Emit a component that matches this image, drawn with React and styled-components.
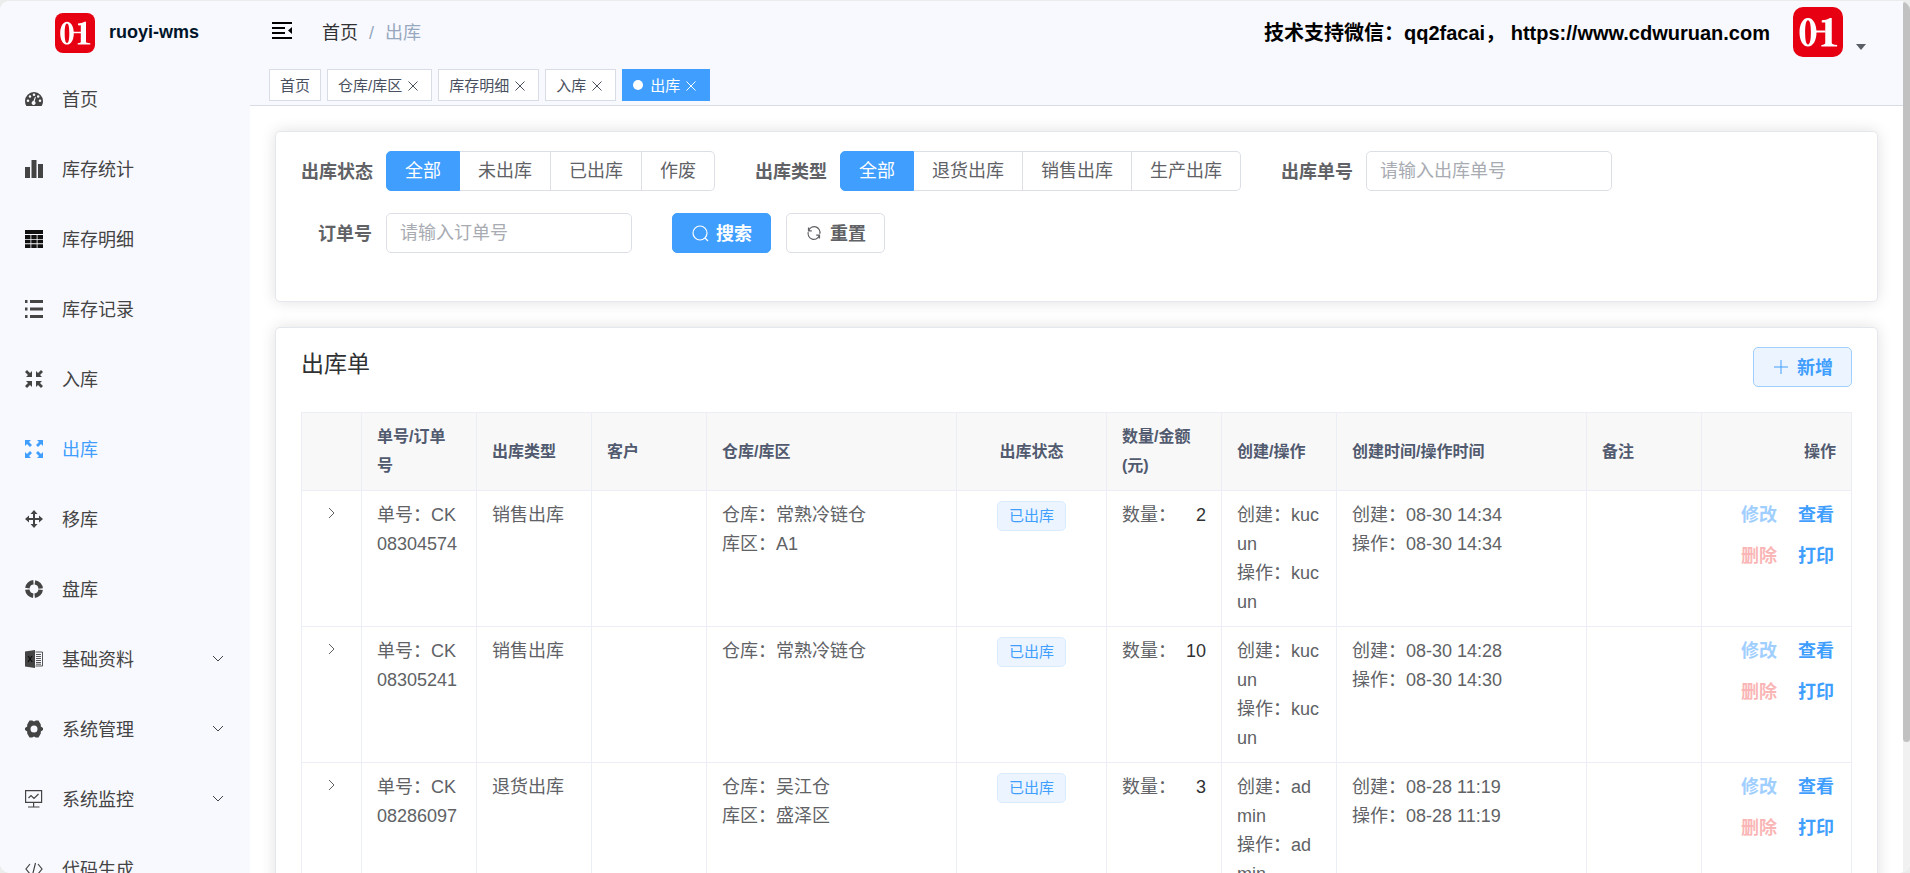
import React, { useState } from "react";
import styled, { createGlobalStyle } from "styled-components";

const GlobalStyle = createGlobalStyle`
  * {
    box-sizing: border-box;
  }

  body {
    margin: 0;
    background-color: #ebecec;
    color: #606266;
    font-family: "Liberation Sans", "Noto Sans CJK SC", sans-serif;
    font-size: 18px;
  }

  button,
  input {
    font-family: inherit;
    font-size: inherit;
  }
`;

const Page = styled.div`
  display: flex;
  height: 100vh;
  overflow: hidden;
  border-top: 1px solid #ebecec;
  border-radius: 10px;
  background-color: white;
`;

const Sidebar = styled.aside`
  flex: 0 0 250px;
  overflow: hidden;
  background-color: #f8f9fe;
`;

const SidebarLogo = styled.a`
  display: flex;
  align-items: center;
  justify-content: center;
  gap: 14px;
  height: 63px;
  padding-left: 4px;
  color: #001529;
  font-weight: bold;
  text-decoration: none;
`;

const Menu = styled.nav`
  display: flex;
  flex-direction: column;
`;

const MenuItem = styled.a`
  display: flex;
  align-items: center;
  flex-shrink: 0;
  height: 70px;
  padding: 0 25px;
  color: ${(props) => (props.$active ? "#409eff" : "#444444")};
  text-decoration: none;

  span {
    flex: 1;
    margin-left: 19px;
    padding-bottom: 2px;
  }
`;

const Main = styled.main`
  flex: 1;
  min-width: 0;
`;

const Header = styled.header`
  background-color: #f8f9fe;
  border-bottom: 1px solid #d8dce5;
`;

const Navbar = styled.div`
  display: flex;
  align-items: center;
  height: 62px;
  padding: 0 37px 2px 22px;
`;

const IconButton = styled.button`
  display: flex;
  padding: 0;
  border: none;
  background: none;
  color: inherit;
  cursor: pointer;
`;

const Breadcrumb = styled.nav`
  display: flex;
  align-items: baseline;
  flex: 1;
  gap: 11px;
  margin-left: 30px;
  color: #97a8be;

  a {
    color: #303133;
    text-decoration: none;
  }
`;

const Support = styled.div`
  margin-right: 23px;
  color: black;
  font-size: 20px;
  font-weight: bold;
  white-space: pre;
`;

const Account = styled(IconButton)`
  align-items: flex-end;
  gap: 13px;
  margin-top: 2px;
  color: #5a5e66;

  .caret {
    margin-bottom: 7px;
  }
`;

const Tags = styled.div`
  display: flex;
  gap: 6px;
  padding: 6px 19px 4px;
`;

const Tag = styled.div`
  display: flex;
  align-items: center;
  height: 32px;
  padding: 0 10px 1px;
  border: 1px solid ${(props) => (props.$active ? "#409eff" : "#d8dce5")};
  background-color: ${(props) => (props.$active ? "#409eff" : "white")};
  color: ${(props) => (props.$active ? "white" : "#495060")};
  font-size: 15px;

  &::before {
    content: "";
    display: ${(props) => (props.$active ? "block" : "none")};
    width: 10px;
    height: 10px;
    margin-right: 7px;
    border-radius: 50%;
    background-color: white;
  }

  a {
    color: inherit;
    text-decoration: none;
  }

  button {
    margin: 2px 3px 0 6px;
  }
`;

const Content = styled.div`
  display: flex;
  flex-direction: column;
  gap: 25px;
  padding: 25px;
`;

const Card = styled.section`
  padding: 19px 25px 26px;
  border: 1px solid #e4e7ed;
  border-radius: 5px;
  background-color: white;
  box-shadow: 0 0 15px rgba(0, 0, 0, 0.12);
`;

const SearchForm = styled.form`
  display: flex;
  flex-wrap: wrap;
  column-gap: 40px;
`;

const FormItem = styled.div`
  display: flex;
  align-items: center;
  height: 40px;
  margin-bottom: 22px;
`;

const Label = styled.label`
  width: 85px;
  padding: 0 14px 2px 0;
  font-weight: bold;
  text-align: right;
  white-space: nowrap;
`;

const Input = styled.input`
  width: 246px;
  height: 40px;
  padding: 0 13px;
  border: 1px solid #dcdfe6;
  border-radius: 5px;
  outline: none;
  color: #606266;

  &::placeholder {
    color: #a8abb2;
  }

  &:focus {
    border-color: #409eff;
  }
`;

const RadioButtons = styled.div`
  display: flex;
`;

const RadioButton = styled.label`
  display: flex;
  align-items: center;
  height: 40px;
  padding: 0 18px 4px;
  border: 1px solid ${(props) => (props.$checked ? "#409eff" : "#dcdfe6")};
  border-left-width: 0;
  background-color: ${(props) => (props.$checked ? "#409eff" : "white")};
  color: ${(props) => (props.$checked ? "white" : "#606266")};
  white-space: nowrap;
  cursor: pointer;

  &:first-child {
    border-left-width: 1px;
    border-radius: 5px 0 0 5px;
  }

  &:last-child {
    border-radius: 0 5px 5px 0;
  }

  input {
    position: absolute;
    opacity: 0;
  }
`;

const buttonColors = {
  primary: ["#409eff", "#409eff", "white"],
  plain: ["#ecf5ff", "#a0cfff", "#409eff"],
  normal: ["white", "#dcdfe6", "#606266"],
};

const Button = styled.button`
  display: flex;
  align-items: center;
  gap: 7px;
  height: 40px;
  padding: 0 18px 2px;
  border: 1px solid ${(props) => buttonColors[props.$kind][1]};
  border-radius: 5px;
  background-color: ${(props) => buttonColors[props.$kind][0]};
  color: ${(props) => buttonColors[props.$kind][2]};
  font-weight: bold;
  white-space: nowrap;
  cursor: pointer;

  svg {
    margin-top: 2px;
  }
`;

const Buttons = styled(FormItem)`
  gap: 15px;
`;

const CardHeader = styled.div`
  display: flex;
  justify-content: space-between;
  margin-bottom: 25px;

  h2 {
    margin: 0;
    color: #303133;
    font-size: 23px;
    font-weight: normal;
    line-height: 34px;
  }
`;

const Table = styled.table`
  width: 100%;
  table-layout: fixed;
  border-collapse: separate;
  border-spacing: 0;
  border-top: 1px solid #ebeef5;
  border-left: 1px solid #ebeef5;
  line-height: 29px;

  th,
  td {
    padding: 10px 15px 9px;
    border-right: 1px solid #ebeef5;
    border-bottom: 1px solid #ebeef5;
    text-align: left;
    word-break: break-all;
  }

  th {
    padding: 9px 15px 10px;
    background-color: #f8f8f9;
    color: #515a6e;
    font-size: 16px;
  }

  td {
    vertical-align: top;
  }

  .center {
    text-align: center;
  }

  .right {
    text-align: right;
  }
`;

const Expand = styled(IconButton)`
  margin: 6px auto 0;
`;

const Status = styled.span`
  display: inline-block;
  height: 30px;
  padding: 0 11px;
  border: 1px solid #d9ecff;
  border-radius: 5px;
  background-color: #ecf5ff;
  color: #409eff;
  font-size: 15px;
  line-height: 28px;
  vertical-align: top;
`;

const Quantity = styled.div`
  display: flex;
  justify-content: space-between;

  b {
    color: #303133;
    font-weight: normal;
  }
`;

const Actions = styled.div`
  display: grid;
  grid-template-columns: auto auto;
  justify-content: end;
  gap: 12px 21px;
  padding-right: 2px;
`;

const LinkButton = styled.button`
  padding: 0;
  border: none;
  background: none;
  color: ${(props) => props.$color};
  font-weight: bold;
  line-height: 29px;
  cursor: pointer;
`;

const Scrollbar = styled.div`
  flex: 0 0 7px;
  background-color: #f1f1f1;
`;

const ScrollThumb = styled.div`
  height: 85%;
  border-radius: 4px;
  background-color: #c1c1c1;
`;

const Logo = ({ size }) => (
  <svg width={size} height={size} viewBox="0 0 40 40">
    <rect width="40" height="40" rx="8" fill="#e60012" />
    <path
      fillRule="evenodd"
      fill="white"
      d="M12 8.800c4.200 0 6.800 5 6.800 11.400S16.200 31.600 12 31.600 5.200 26.600 5.200 20.200 7.800 8.800 12 8.800zm0 1.700c-1.700 0-2.300 4-2.300 9.700s.6 9.700 2.300 9.700 2.300-4 2.300-9.700-.6-9.700-2.300-9.700z"
    />
    <path fill="white" d="M15.500 18.800h10.500v1.500H15.500z" />
    <path
      fill="white"
      d="M23 10.500c2.500 0 4.500-.5 6.500-1.700h1.500v20c0 1 1.300 1.400 4.300 1.500v1.300H22.700v-1.300c2.200-.1 3.100-.5 3.100-1.500V12.300c-.9.200-1.700.1-2.800 0z"
    />
  </svg>
);

// Sidebar glyphs, all on an 18px grid
const icons = {
  dashboard: (
    <path
      fillRule="evenodd"
      d="M9 2a9 9 0 0 1 9 9c0 2-.5 3.500-1.300 5H1.300A10 10 0 0 1 0 11a9 9 0 0 1 9-9zM3 9.500a1.300 1.300 0 1 0 0 2.600 1.300 1.300 0 0 0 0-2.600zm2-4.300a1.300 1.300 0 1 0 0 2.600 1.300 1.300 0 0 0 0-2.600zm4-1.800A1.300 1.300 0 1 0 9 6a1.300 1.300 0 0 0 0-2.600zm4.200 1.800a1.300 1.300 0 1 0 0 2.600 1.300 1.300 0 0 0 0-2.600zM15 9.500a1.300 1.300 0 1 0 0 2.600 1.300 1.300 0 0 0 0-2.600zm-5-2.700L8.400 11a2 2 0 1 0 1.300.3l1.200-4.200z"
    />
  ),
  chart: <path d="M0 7h5v11H0zM6.500 0h5v18h-5zM13 4h5v14h-5z" />,
  table: (
    <path
      fill="#111111"
      d="M0 0h18v4H0zM0 5h5.500v4H0zM6.300 5h5.400v4H6.300zM12.500 5H18v4h-5.500zM0 9.800h5.500v3.500H0zM6.300 9.800h5.400v3.500H6.300zM12.500 9.800H18v3.500h-5.500zM0 14.200h5.500V18H0zM6.300 14.200h5.400V18H6.300zM12.500 14.200H18V18h-5.500z"
    />
  ),
  list: (
    <path d="M0 0h2.500v3H0zM5 0h13v3H5zM0 7.500h2.500v3H0zM5 7.500h13v3H5zM0 15h2.500v3H0zM5 15h13v3H5z" />
  ),
  shrink: (
    <path d="M2 0l3 3 2-2v6H1l2-2-3-3zM16 0l-3 3-2-2v6h6l-2-2 3-3zM2 18l3-3 2 2v-6H1l2 2-3 3zM16 18l-3-3-2 2v-6h6l-2 2 3 3z" />
  ),
  expand: (
    <path d="M0 0h6L4 2l3 3-2 2-3-3-2 2zM18 0h-6l2 2-3 3 2 2 3-3 2 2zM0 18h6l-2-2 3-3-2-2-3 3-2-2zM18 18h-6l2-2-3-3 2-2 3 3 2-2z" />
  ),
  move: (
    <path d="M9 0l3.500 4H10v4h4V5.500L18 9l-4 3.500V10h-4v4h2.500L9 18l-3.500-4H8v-4H4v2.500L0 9l4-3.500V8h4V4H5.500z" />
  ),
  ring: (
    <g fill="none" stroke="currentColor" strokeWidth="4.500">
      <circle cx="9" cy="9" r="6.700" strokeDasharray="9 1.524" strokeDashoffset="-0.762" />
    </g>
  ),
  excel: (
    <>
      <path d="M0 1.500 10 0v18L0 16.500z" />
      <path
        d="M10.500 2h7v14h-7M11 4.500h5M11 6.500h5M11 8.500h5M11 10.500h5M11 12.500h5M11 14.200h5"
        fill="none"
        stroke="currentColor"
        strokeWidth="0.900"
      />
      <path d="M3.200 6l4 6M7 6l-4 6" stroke="#111111" strokeWidth="1.300" />
    </>
  ),
  gear: (
    <path
      fillRule="evenodd"
      d="M4.500 0.500h2.700L9 1.500l1.800-1h2.700l2.300 4v2L18 8v2l-2.200 1.500v2l-2.300 4h-2.700L9 16.500l-1.800 1H4.500l-2.300-4v-2L0 10V8l2.200-1.500v-2zM9 5.500a3.500 3.500 0 1 0 0 7 3.500 3.500 0 0 0 0-7z"
    />
  ),
  monitor: (
    <path
      d="M.600.600h16v11.800H.600zM8.600 12.500V17M3 17h11.500M3.500 8l2.500-2.500 3 3 4.500-4.500"
      fill="none"
      stroke="currentColor"
      strokeWidth="1.200"
    />
  ),
  code: (
    <path
      d="M5 4 1 9l4 5M13 4l4 5-4 5M10.500 3l-3 12"
      fill="none"
      stroke="currentColor"
      strokeWidth="1.200"
    />
  ),
};

const MenuIcon = ({ name }) => (
  <svg width="18" height="18" viewBox="0 0 18 18" fill="currentColor">
    {icons[name]}
  </svg>
);

const Line = ({ width, height, d, stroke = 1 }) => (
  <svg
    width={width}
    height={height}
    viewBox={`0 0 ${width} ${height}`}
    fill="none"
    stroke="currentColor"
    strokeWidth={stroke}
  >
    <path d={d} />
  </svg>
);

const menu = [
  { icon: "dashboard", title: "首页" },
  { icon: "chart", title: "库存统计" },
  { icon: "table", title: "库存明细" },
  { icon: "list", title: "库存记录" },
  { icon: "shrink", title: "入库" },
  { icon: "expand", title: "出库", active: true },
  { icon: "move", title: "移库" },
  { icon: "ring", title: "盘库" },
  { icon: "excel", title: "基础资料", children: true },
  { icon: "gear", title: "系统管理", children: true },
  { icon: "monitor", title: "系统监控", children: true },
  { icon: "code", title: "代码生成" },
];

const tags = ["首页", "仓库/库区", "库存明细", "入库", "出库"];

const orders = [
  {
    no: "CK08304574",
    type: "销售出库",
    warehouse: "常熟冷链仓",
    area: "A1",
    quantity: 2,
    user: "kucun",
    created: "08-30 14:34",
    updated: "08-30 14:34",
  },
  {
    no: "CK08305241",
    type: "销售出库",
    warehouse: "常熟冷链仓",
    quantity: 10,
    user: "kucun",
    created: "08-30 14:28",
    updated: "08-30 14:30",
  },
  {
    no: "CK08286097",
    type: "退货出库",
    warehouse: "吴江仓",
    area: "盛泽区",
    quantity: 3,
    user: "admin",
    created: "08-28 11:19",
    updated: "08-28 11:19",
  },
];

const RadioGroup = ({ name, label, options }) => {
  const [value, setValue] = useState(options[0]);

  return (
    <FormItem role="radiogroup" aria-labelledby={name}>
      <Label as="span" id={name}>
        {label}
      </Label>
      <RadioButtons>
        {options.map((option) => (
          <RadioButton key={option} $checked={option === value}>
            <input
              type="radio"
              name={name}
              checked={option === value}
              onChange={() => setValue(option)}
            />
            {option}
          </RadioButton>
        ))}
      </RadioButtons>
    </FormItem>
  );
};

const OrderRow = ({ order }) => (
  <tr>
    <td>
      <Expand type="button" aria-label="展开">
        <Line width={7} height={12} d="M1 1l5 5-5 5" />
      </Expand>
    </td>
    <td>{`单号：${order.no}`}</td>
    <td>{order.type}</td>
    <td></td>
    <td>
      <div>{`仓库：${order.warehouse}`}</div>
      {order.area && <div>{`库区：${order.area}`}</div>}
    </td>
    <td className="center">
      <Status>已出库</Status>
    </td>
    <td>
      <Quantity>
        <span>数量：</span>
        <b>{order.quantity}</b>
      </Quantity>
    </td>
    <td>
      <div>{`创建：${order.user}`}</div>
      <div>{`操作：${order.user}`}</div>
    </td>
    <td>
      <div>{`创建：${order.created}`}</div>
      <div>{`操作：${order.updated}`}</div>
    </td>
    <td></td>
    <td>
      <Actions>
        <LinkButton $color="#a0cfff" disabled>
          修改
        </LinkButton>
        <LinkButton $color="#409eff">查看</LinkButton>
        <LinkButton $color="#fab6b6" disabled>
          删除
        </LinkButton>
        <LinkButton $color="#409eff">打印</LinkButton>
      </Actions>
    </td>
  </tr>
);

const App = () => (
  <>
    <GlobalStyle />
    <Page>
      <Sidebar>
        <SidebarLogo href="#">
          <Logo size={40} />
          ruoyi-wms
        </SidebarLogo>
        <Menu>
          {menu.map((item) => (
            <MenuItem key={item.title} href="#" $active={item.active}>
              <MenuIcon name={item.icon} />
              <span>{item.title}</span>
              {item.children && <Line width={14} height={8} d="M2 1l5 5 5-5" />}
            </MenuItem>
          ))}
        </Menu>
      </Sidebar>

      <Main>
        <Header>
          <Navbar>
            <IconButton type="button" aria-label="收起菜单">
              <svg width="20" height="18" viewBox="0 0 20 18" fill="black">
                <path d="M0 0h20v2H0zM0 5h13v2H0zM0 10h13v2H0zM0 15h20v2H0zM20 5v7l-4-3.500z" />
              </svg>
            </IconButton>
            <Breadcrumb>
              <a href="#">首页</a>
              <span>/</span>
              <span>出库</span>
            </Breadcrumb>
            <Support>技术支持微信：qq2facai， https://www.cdwuruan.com</Support>
            <Account type="button" aria-label="用户菜单">
              <Logo size={50} />
              <svg className="caret" width="10" height="6" fill="currentColor">
                <path d="M0 0h10L5 6z" />
              </svg>
            </Account>
          </Navbar>
          <Tags>
            {tags.map((tag, index) => (
              <Tag key={tag} $active={tag === "出库"}>
                <a href="#">{tag}</a>
                {index > 0 && (
                  <IconButton type="button" aria-label="关闭">
                    <Line width={10} height={10} d="M.5.500l9 9M9.500.500l-9 9" />
                  </IconButton>
                )}
              </Tag>
            ))}
          </Tags>
        </Header>

        <Content>
          <Card>
            <SearchForm>
              <RadioGroup
                name="status"
                label="出库状态"
                options={["全部", "未出库", "已出库", "作废"]}
              />
              <RadioGroup
                name="type"
                label="出库类型"
                options={["全部", "退货出库", "销售出库", "生产出库"]}
              />
              <FormItem>
                <Label htmlFor="shipmentNo">出库单号</Label>
                <Input id="shipmentNo" placeholder="请输入出库单号" />
              </FormItem>
              <FormItem>
                <Label htmlFor="orderNo">订单号</Label>
                <Input id="orderNo" placeholder="请输入订单号" />
              </FormItem>
              <Buttons>
                <Button type="button" $kind="primary">
                  <Line
                    width={18}
                    height={18}
                    stroke={1.2}
                    d="M16 9a7 7 0 1 1-14 0 7 7 0 0 1 14 0zM14 14l3 3"
                  />
                  搜索
                </Button>
                <Button type="reset" $kind="normal">
                  <Line
                    width={18}
                    height={18}
                    stroke={1.2}
                    d="M3.500 3.500v3.300h3.300M3.700 6.500A5.800 5.800 0 0 1 14.800 9.800M14.500 14.500v-3.300h-3.300M14.300 11.500A5.800 5.800 0 0 1 3.200 8.200"
                  />
                  重置
                </Button>
              </Buttons>
            </SearchForm>
          </Card>

          <Card>
            <CardHeader>
              <h2>出库单</h2>
              <Button type="button" $kind="plain">
                <Line width={18} height={18} d="M9 2v14M2 9h14" />
                新增
              </Button>
            </CardHeader>
            <Table>
              <colgroup>
                <col width="60" />
                <col width="115" />
                <col />
                <col />
                <col width="250" />
                <col width="150" />
                <col />
                <col />
                <col width="250" />
                <col />
                <col width="150" />
              </colgroup>
              <thead>
                <tr>
                  <th></th>
                  <th>单号/订单号</th>
                  <th>出库类型</th>
                  <th>客户</th>
                  <th>仓库/库区</th>
                  <th className="center">出库状态</th>
                  <th>数量/金额(元)</th>
                  <th>创建/操作</th>
                  <th>创建时间/操作时间</th>
                  <th>备注</th>
                  <th className="right">操作</th>
                </tr>
              </thead>
              <tbody>
                {orders.map((order) => (
                  <OrderRow key={order.no} order={order} />
                ))}
              </tbody>
            </Table>
          </Card>
        </Content>
      </Main>

      <Scrollbar>
        <ScrollThumb />
      </Scrollbar>
    </Page>
  </>
);

export default App;
